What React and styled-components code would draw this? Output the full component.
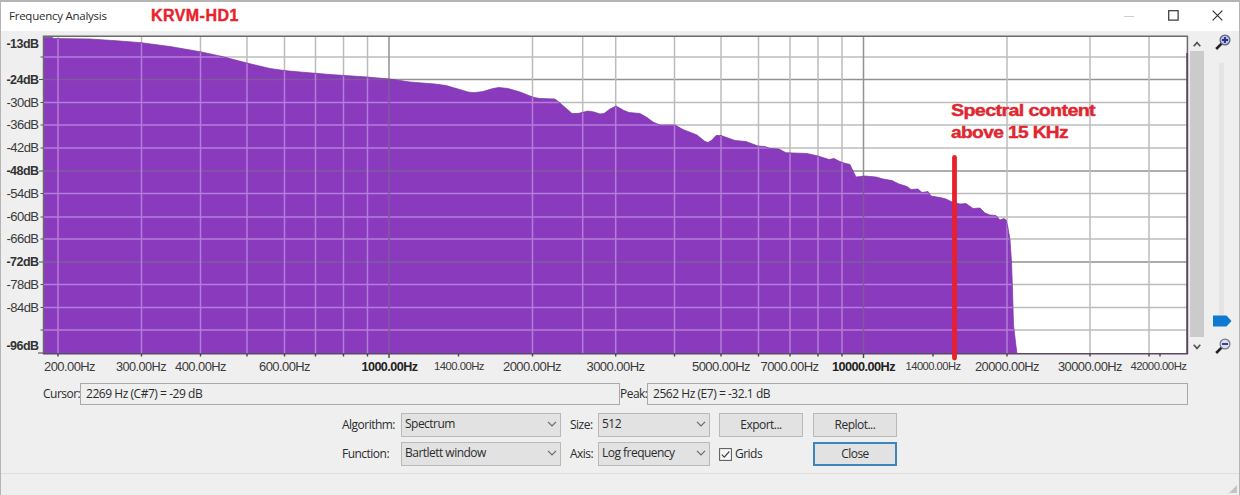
import React from 'react';
import styled, { createGlobalStyle } from 'styled-components';

const GlobalStyle = createGlobalStyle`
    * {
        box-sizing: border-box;
    }
    body {
        margin: 0;
        background: #efefef;
        overflow: hidden;
    }
`
const Window = styled.div`
    display: flex;
    flex-direction: column;
    width: 1240px;
    height: 495px;
    background: #efefef;
    border-top: 2px solid #b4b4b4;
    border-left: 1px solid #b4b4b4;
    border-right: 1px solid #b4b4b4;
    font-family: 'Open Sans', sans-serif;
    font-size: 12px;
    letter-spacing: -0.52px;
    line-height: 16px;
    color: #2c2c2c;
`
const TitleBar = styled.div`
    display: flex;
    align-items: center;
    height: 29px;
    flex-shrink: 0;
    padding-left: 8px;
    background: white;
`
const Title = styled.div`
    width: 142px;
    padding-bottom: 2px;
    font-size: 11.5px;
    letter-spacing: -0.25px;
`
const Station = styled.div`
    flex: 1;
    padding-bottom: 2px;
    font-family: 'Liberation Sans', sans-serif;
    font-weight: bold;
    font-size: 16px;
    letter-spacing: 0.45px;
    color: #e8212b;
    -webkit-text-stroke: 0.4px #e8212b;
`
const WindowButton = styled.div`
    display: flex;
    align-items: center;
    justify-content: center;
    width: 44px;
    height: 29px;
    padding-bottom: 2px;
`
const Main = styled.div`
    display: flex;
    height: 346px;
    flex-shrink: 0;
`
const Chart = styled.svg`
    flex-shrink: 0;
`
const ScrollBar = styled.div`
    display: flex;
    flex-direction: column;
    align-items: center;
    flex-shrink: 0;
    width: 15px;
    height: 320px;
    margin-top: 6px;
`
const ScrollThumb = styled.div`
    width: 14px;
    height: 286px;
    background: #cbcbcb;
`
const ScrollArrow = styled.div`
    display: flex;
    align-items: center;
    justify-content: center;
    height: ${props => props.$height}px;
`
const ZoomPanel = styled.div`
    display: flex;
    flex-direction: column;
    align-items: center;
    width: 35px;
    padding-top: 3px;
`
const Glass = styled.svg`
    flex-shrink: 0;
    margin-left: 3px;
`
const SliderTrack = styled.div`
    width: 5px;
    height: 252px;
    margin-top: 13px;
    background: #e4e4e4;
`
const SliderThumb = styled.svg`
    flex-shrink: 0;
    margin: 0 0 11px 1px;
`
const Readouts = styled.div`
    display: flex;
    height: 23px;
    flex-shrink: 0;
    margin: 6px 51px 0 42px;
`
const ReadoutLabel = styled.div`
    width: ${props => props.$width}px;
    padding-top: 3px;
    white-space: nowrap;
`
const ReadoutField = styled.div`
    width: ${props => props.$width}px;
    height: 22px;
    padding: 2px 5px;
    border: 1px solid #a9a9a9;
    letter-spacing: -0.46px;
`
const Controls = styled.div`
    display: grid;
    grid-template-columns: 59px 160px 37px 112px 94px 84px;
    grid-template-rows: 24px 24px;
    row-gap: 5px;
    margin: 7px 0 0 341px;
    align-items: center;
`
const Label = styled.div`
    padding-left: ${props => props.$indent || 0}px;
`
const Select = styled.div`
    display: flex;
    align-items: center;
    justify-content: space-between;
    height: 24px;
    padding: 0 3px 2px 3px;
    background: #e2e2e2;
    border: 1px solid #b9b9b9;
`
const Button = styled.div`
    display: flex;
    align-items: center;
    justify-content: center;
    width: 84px;
    height: 24px;
    margin-left: ${props => props.$offset}px;
    background: #e2e2e2;
    border: ${props => props.$primary ? '2px solid #3c86bd' : '1px solid #b9b9b9'};
`
const CheckBox = styled.div`
    display: flex;
    align-items: center;
    gap: 3px;
    padding-left: 9px;
`
const StatusBar = styled.div`
    display: flex;
    align-items: flex-end;
    justify-content: flex-end;
    flex: 1;
    margin-top: 7px;
    border-top: 1px solid #dedede;
`

const dbLines = [57, 79.5, 102.5, 125, 148, 171, 193.5, 217, 239, 262, 284.5, 307.5, 330];
const dbMajor = [79.5, 171, 262];
const hzLines = [58, 141.5, 200.5, 247, 284.5, 315.5, 343.5, 367.5, 389, 532.5, 582.7, 615.7, 674.5, 721, 758.5, 790, 818, 842, 863.5, 1007, 1090, 1149];
const hzMajor = [389, 863.5];
const hzTicks = [58, 141.5, 200.5, 247, 284.5, 315.5, 343.5, 367.5, 389, 458.5, 532.5, 615.7, 674.5, 721, 758.5, 790, 818, 842, 863.5, 933, 1007, 1090, 1149, 1160];

const dbLabels = [
    ['-13dB', 44, true], ['-24dB', 79.5, true], ['-30dB', 102.5], ['-36dB', 125], ['-42dB', 148],
    ['-48dB', 171, true], ['-54dB', 193.5], ['-60dB', 217], ['-66dB', 239], ['-72dB', 262, true],
    ['-78dB', 284.5], ['-84dB', 307.5], ['-96dB', 345.5, true],
];

// text, left edge, width, style
const hzLabels = [
    ['200.00Hz', 44, 51], ['300.00Hz', 116, 50], ['400.00Hz', 175, 51], ['600.00Hz', 259, 51],
    ['1000.00Hz', 361.5, 56, 'bold'], ['1400.00Hz', 434, 50, 'small'], ['2000.00Hz', 503, 58],
    ['3000.00Hz', 586.5, 58], ['5000.00Hz', 692, 58], ['7000.00Hz', 760.5, 58],
    ['10000.00Hz', 832, 63, 'bold'], ['14000.00Hz', 905.5, 55, 'small'], ['20000.00Hz', 975, 64],
    ['30000.00Hz', 1058, 64], ['42000.00Hz', 1130.5, 56, 'small'],
];

const curve = [
    [43, 37.5], [52, 37.5], [54, 38.5], [90, 39], [120, 41], [141, 42.7], [170, 46.5], [200, 51.7], [220, 56],
    [247, 63], [270, 68.5], [284, 70.5], [300, 72], [330, 74.5], [367, 77], [389, 79], [410, 82], [435, 84],
    [446, 85.5], [458, 89], [468, 92], [474, 92.7], [483, 91.5], [493, 88.5], [499, 87.5], [508, 88.5], [520, 92],
    [534, 97.5], [540, 98.5], [555, 99], [560, 103], [572, 113.5], [578, 113.5], [588, 111], [594, 112], [600, 114],
    [604, 113.5], [610, 109], [616, 106], [624, 110.5], [629, 112.5], [640, 113.5], [647, 117.5], [653, 122],
    [660, 125], [675, 125], [683, 129.5], [697, 135], [705, 141.5], [708, 142.5], [712, 140], [716, 135.5],
    [721, 135.5], [735, 140.5], [746, 141.5], [758, 146], [765, 146.5], [770, 148.5], [779, 149], [786, 152.7],
    [807, 153.5], [818, 156], [829, 159.5], [834, 158.5], [842, 162.5], [850, 164.5], [853, 171], [856, 177],
    [865, 176], [876, 177], [883, 179], [892, 180.5], [899, 184], [907, 186.5], [911, 189.5], [918, 189],
    [922, 192.5], [928, 191.5], [931, 196], [940, 197.5], [946, 199], [952, 202], [960, 204], [966, 203.5],
    [973, 208.5], [980, 208], [985, 213], [990, 215], [996, 215.5], [1000, 220], [1004, 218.5], [1006, 220],
    [1008, 228], [1010, 240], [1011.5, 262], [1012.5, 290], [1013.5, 325], [1015.5, 342], [1017, 354],
];

const outlinePath = 'M' + curve.map(p => p.join(' ')).join(' L');
const areaPath = outlinePath + ' L43 354 Z';

function Grid({ minor, major }) {
  return (
      <g>
          {dbLines.map(y => (
              <line key={'y' + y} x1={43} x2={1187} y1={y} y2={y} stroke={dbMajor.includes(y) ? major : minor} strokeWidth={1.3} />
          ))}
          {hzLines.map(x => (
              <line key={'x' + x} x1={x} x2={x} y1={36} y2={353} stroke={hzMajor.includes(x) ? major : minor} strokeWidth={1.5} />
          ))}
      </g>
  );
}

function SpectrumChart() {
  return (
      <Chart width="1188" height="346" viewBox="1 31 1188 346" fontFamily="'Liberation Sans', sans-serif">
          <defs>
              <clipPath id="area"><path d={areaPath} /></clipPath>
          </defs>
          <rect x={43} y={36} width={1144} height={318} fill="white" />
          <Grid minor="#bcbcbc" major="#929292" />
          <path d={areaPath} fill="#8a3abc" />
          <g clipPath="url(#area)"><Grid minor="#b57dda" major="#805a9f" /></g>
          <path d={outlinePath} fill="none" stroke="#763a98" strokeWidth={0.7} />
          <path d="M43.5 354V36.3H1187.4V354" fill="none" stroke="#6b6b6b" strokeWidth={1.5} />
          <path d="M1187.2 53V354" stroke="#57465f" strokeWidth={1.8} />
          <path d="M43 353.8H1188" stroke="#5b4a65" strokeWidth={1.6} />

          {dbLines.map(y => (
              <line key={y} x1={dbMajor.includes(y) ? 39 : 40.5} x2={43} y1={y} y2={y} stroke="#555" />
          ))}
          <path d="M38 353H43" stroke="#444" />
          {hzTicks.map(x => (
              <line key={x} x1={x} x2={x} y1={354} y2={hzMajor.includes(x) ? 358 : 356.5} stroke="#444" strokeWidth={1.4} />
          ))}

          {dbLabels.map(([text, y, bold]) => (
              <text key={text} x={6.5} y={y + 4.2} fontSize={12} fontWeight={bold ? 'bold' : 'normal'} fill={bold ? '#333' : '#3a3a3a'} textLength={32} lengthAdjust="spacingAndGlyphs">{text}</text>
          ))}
          {hzLabels.map(([text, x, width, kind]) => (
              <text key={text} x={x} y={kind === 'small' ? 369.7 : 370.5} fontSize={kind === 'small' ? 11 : 12} fontWeight={kind === 'bold' ? 'bold' : 'normal'} fill={kind === 'bold' ? '#222' : '#3a3a3a'} textLength={width} lengthAdjust="spacingAndGlyphs">{text}</text>
          ))}

          <line x1={954.5} x2={954.5} y1={157.5} y2={358} stroke="#e8202c" strokeWidth={4.8} strokeLinecap="round" />
          <g fontSize={16} fontWeight="bold" fill="#e0262f" stroke="#e0262f" strokeWidth={0.4}>
              <text x={951} y={115.7} textLength={144} lengthAdjust="spacingAndGlyphs">Spectral content</text>
              <text x={951} y={138.2} textLength={117} lengthAdjust="spacingAndGlyphs">above 15 KHz</text>
          </g>
      </Chart>
  );
}

function Chevron() {
  return (
      <svg width="10" height="6" viewBox="0 0 10 6"><path d="M1 0.8L5 4.8L9 0.8" fill="none" stroke="#6a6a6a" strokeWidth="1.2" /></svg>
  );
}

function Magnifier({ plus }) {
  return (
      <Glass width="16" height="16" viewBox="0 0 16 16">
          <path d="M1.2 15L6.8 9.4" stroke="#222" strokeWidth="2.6" />
          <circle cx="10" cy="6" r="4.9" fill={plus ? '#b9c0e6' : '#dcdcec'} stroke={plus ? '#5b6285' : '#77778c'} strokeWidth="1.2" />
          <path d={plus ? 'M7 6H13M10 3V9' : 'M7 6H13'} stroke="#26307e" strokeWidth="1.8" />
      </Glass>
  );
}

export default function App() {
  return (
      <Window>
          <GlobalStyle />
          <TitleBar>
              <Title>Frequency Analysis</Title>
              <Station>KRVM-HD1</Station>
              <WindowButton>
                  <svg width="10" height="10"><path d="M0 5.5H10" stroke="#cfcfcf" /></svg>
              </WindowButton>
              <WindowButton>
                  <svg width="11" height="11"><rect x="0.7" y="0.7" width="9.4" height="9.4" fill="none" stroke="#333" strokeWidth="1.2" /></svg>
              </WindowButton>
              <WindowButton>
                  <svg width="11" height="11"><path d="M0.7 0.7L10.3 10.3M10.3 0.7L0.7 10.3" stroke="#333" strokeWidth="1.2" /></svg>
              </WindowButton>
          </TitleBar>
          <Main>
              <SpectrumChart />
              <ScrollBar>
                  <ScrollArrow $height={14}>
                      <svg width="8" height="6"><path d="M0.7 5.2L4 1.6L7.3 5.2" fill="none" stroke="#555" strokeWidth="1.7" /></svg>
                  </ScrollArrow>
                  <ScrollThumb />
                  <ScrollArrow $height={20}>
                      <svg width="8" height="6"><path d="M0.7 0.8L4 4.4L7.3 0.8" fill="none" stroke="#555" strokeWidth="1.7" /></svg>
                  </ScrollArrow>
              </ScrollBar>
              <ZoomPanel>
                  <Magnifier plus />
                  <SliderTrack />
                  <SliderThumb width="20" height="12" viewBox="0 0 20 12"><path d="M1 0.5H14.5L19.5 6L14.5 11.5H1Z" fill="#0d79d3" /></SliderThumb>
                  <Magnifier />
              </ZoomPanel>
          </Main>
          <Readouts>
              <ReadoutLabel $width={37}>Cursor:</ReadoutLabel>
              <ReadoutField $width={540}>2269 Hz (C#7) = -29 dB</ReadoutField>
              <ReadoutLabel $width={27}>Peak:</ReadoutLabel>
              <ReadoutField $width={541}>2562 Hz (E7) = -32.1 dB</ReadoutField>
          </Readouts>
          <Controls>
              <Label>Algorithm:</Label>
              <Select>Spectrum<Chevron /></Select>
              <Label $indent={9}>Size:</Label>
              <Select>512<Chevron /></Select>
              <Button $offset={9}>Export...</Button>
              <Button $offset={9}>Replot...</Button>
              <Label>Function:</Label>
              <Select>Bartlett window<Chevron /></Select>
              <Label $indent={9}>Axis:</Label>
              <Select>Log frequency<Chevron /></Select>
              <CheckBox>
                  <svg width="13" height="13" viewBox="0 0 13 13">
                      <rect x="0.6" y="0.6" width="11.8" height="11.8" fill="#f8f8f8" stroke="#555" />
                      <path d="M2.8 6.6L5.3 9.2L10.3 3.5" fill="none" stroke="#444" strokeWidth="1.2" />
                  </svg>
                  Grids
              </CheckBox>
              <Button $offset={9} $primary>Close</Button>
          </Controls>
          <StatusBar>
              <svg width="12" height="12" viewBox="0 0 12 12"><path d="M10 2V10H2Z" fill="#c4c4c4" /></svg>
          </StatusBar>
      </Window>
  );
}
